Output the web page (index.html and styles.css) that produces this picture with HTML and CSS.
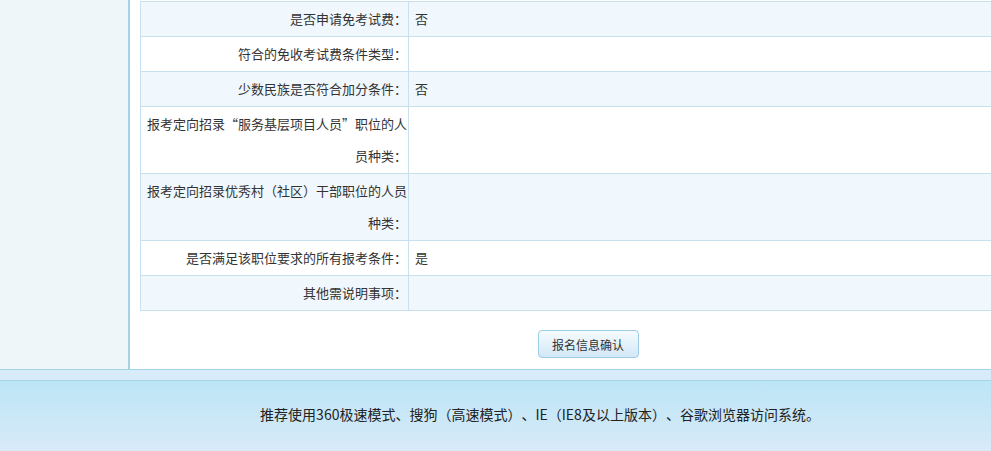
FILE: index.html
```html
<!DOCTYPE html>
<html lang="zh-CN">
<head>
    <meta charset="UTF-8">
    <meta name="viewport" content="width=device-width, initial-scale=1.0">
    <title>报名信息确认</title>
    <link rel="stylesheet" href="styles.css">
</head>
<body>
    <div class="page">
        <div class="main">
            <div class="sidebar"></div>
            <div class="content">
                <table class="info-table">
                    <tr class="alt">
                        <td class="label">是否申请免考试费：</td>
                        <td class="value">否</td>
                    </tr>
                    <tr>
                        <td class="label">符合的免收考试费条件类型：</td>
                        <td class="value"></td>
                    </tr>
                    <tr class="alt">
                        <td class="label">少数民族是否符合加分条件：</td>
                        <td class="value">否</td>
                    </tr>
                    <tr>
                        <td class="label">报考定向招录“服务基层项目人员”职位的人员种类：</td>
                        <td class="value"></td>
                    </tr>
                    <tr class="alt">
                        <td class="label">报考定向招录优秀村（社区）干部职位的人员种类：</td>
                        <td class="value"></td>
                    </tr>
                    <tr>
                        <td class="label">是否满足该职位要求的所有报考条件：</td>
                        <td class="value">是</td>
                    </tr>
                    <tr class="alt">
                        <td class="label">其他需说明事项：</td>
                        <td class="value"></td>
                    </tr>
                </table>
                <div class="actions">
                    <button class="btn" type="button">报名信息确认</button>
                </div>
            </div>
        </div>
        <div class="band"></div>
        <div class="footer">
            推荐使用360极速模式、搜狗（高速模式）、IE（IE8及以上版本）、谷歌浏览器访问系统。
        </div>
    </div>
</body>
</html>
```

FILE: styles.css
```css
html, body {
    margin: 0;
    padding: 0;
    overflow: hidden;
}

body {
    font-family: "Noto Sans CJK SC", sans-serif;
    font-size: 13px;
    color: #333333;
    background-color: #ffffff;
    text-spacing-trim: space-all;
}

.page {
    width: 1080px;
}

.main {
    display: flex;
    width: 1046px;
    height: 369px;
}

.sidebar {
    width: 128px;
    background-color: #eef6fa;
    border-right: 2px solid #a3d2e5;
}

.content {
    flex: 1;
    padding: 1px 10px 0 10px;
    background-color: #ffffff;
}

.info-table {
    width: 896px;
    border-collapse: collapse;
    border: 1px solid #c9e0ee;
}

.info-table td {
    border: 1px solid #c9e0ee;
    padding: 1px 0;
    line-height: 32px;
    vertical-align: middle;
}

.info-table tr.alt td {
    background-color: #f0f7fd;
}

.info-table td.label {
    width: 260px;
    padding-left: 6px;
    padding-right: 1px;
    text-align: right;
}

.info-table td.value {
    padding-left: 6px;
}

.actions {
    margin-top: 19px;
    text-align: center;
}

.btn {
    width: 101px;
    height: 28px;
    border: 1px solid #9ccbe4;
    border-radius: 4px;
    background: linear-gradient(#f5fbfe, #d2e8f6);
    font-family: "Noto Sans CJK SC", sans-serif;
    font-size: 12px;
    color: #333333;
    padding: 0;
    text-spacing-trim: space-all;
}

.band {
    height: 10px;
    background-color: #d7ebf8;
    border-top: 1px solid #a6d3e7;
    border-bottom: 1px solid #a6d3e7;
}

.footer {
    height: 70px;
    line-height: 66px;
    text-align: center;
    font-size: 14px;
    color: #222222;
    background: linear-gradient(#bce5f6, #d8eaf8);
}
```
